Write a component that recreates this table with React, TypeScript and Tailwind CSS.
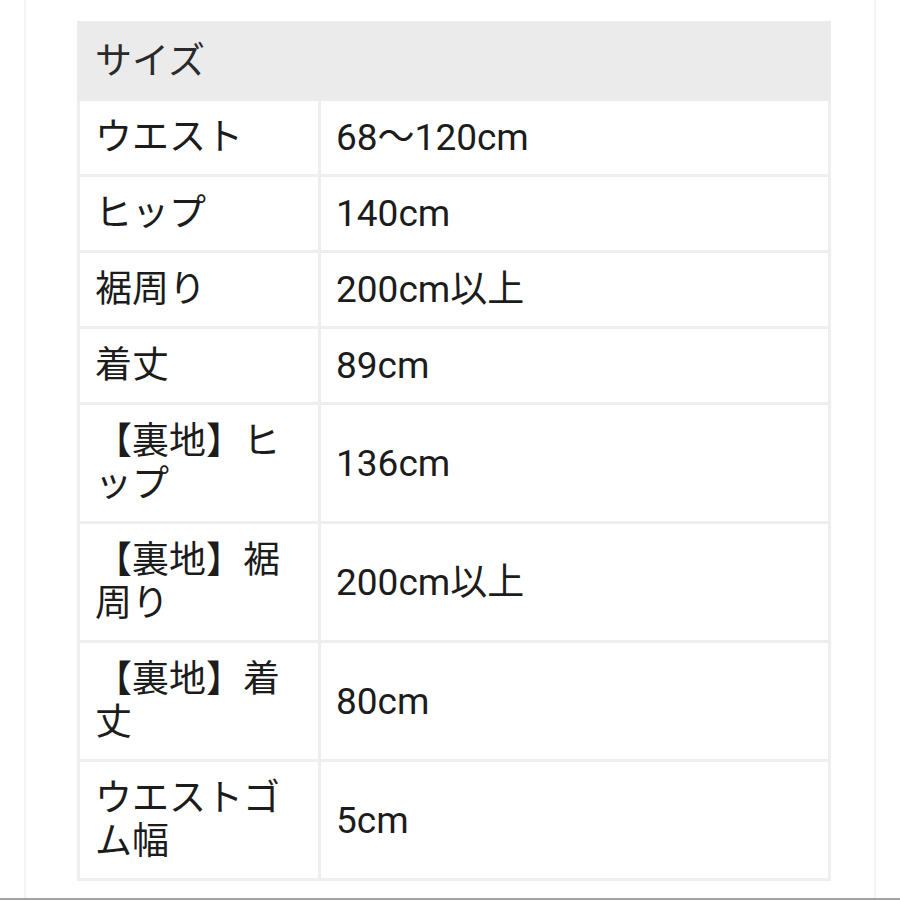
const rows: [string, string][] = [
  ["ウエスト", "68〜120cm"],
  ["ヒップ", "140cm"],
  ["裾周り", "200cm以上"],
  ["着丈", "89cm"],
  ["【裏地】ヒップ", "136cm"],
  ["【裏地】裾周り", "200cm以上"],
  ["【裏地】着丈", "80cm"],
  ["ウエストゴム幅", "5cm"],
];

export default function App() {
  return (
    <div className="w-[900px] h-[900px] bg-white border-b-2 border-[#a3a3a3] overflow-hidden">
      <div className="mx-[24px] h-full border-x-2 border-[#f4f4f4] pt-[21px] pl-[51px]">
        <table
          className="table-fixed border-collapse w-[754px] text-[37px] leading-[43px] text-[#1c1c1c]"
          style={{ fontFamily: 'Roboto, "Noto Sans CJK JP", sans-serif' }}
        >
          <colgroup>
            <col className="w-[241px]" />
            <col />
          </colgroup>
          <thead>
            <tr>
              <th
                colSpan={2}
                className="bg-[#ebebeb] border-[3px] border-[#ebebeb] text-left font-normal pl-[15px] pt-[16px] pb-[15px] text-[#2a2a2a]"
              >
                サイズ
              </th>
            </tr>
          </thead>
          <tbody>
            {rows.map(([k, v]) => (
              <tr key={k}>
                <td className="border-[3px] border-[#eeeeee] pl-[15px] pr-[26px] pt-[15px] pb-[15px] align-middle break-all">
                  {k}
                </td>
                <td className="border-[3px] border-[#eeeeee] pl-[15px] pt-[15px] pb-[15px] align-middle">
                  {v}
                </td>
              </tr>
            ))}
          </tbody>
        </table>
      </div>
    </div>
  );
}
